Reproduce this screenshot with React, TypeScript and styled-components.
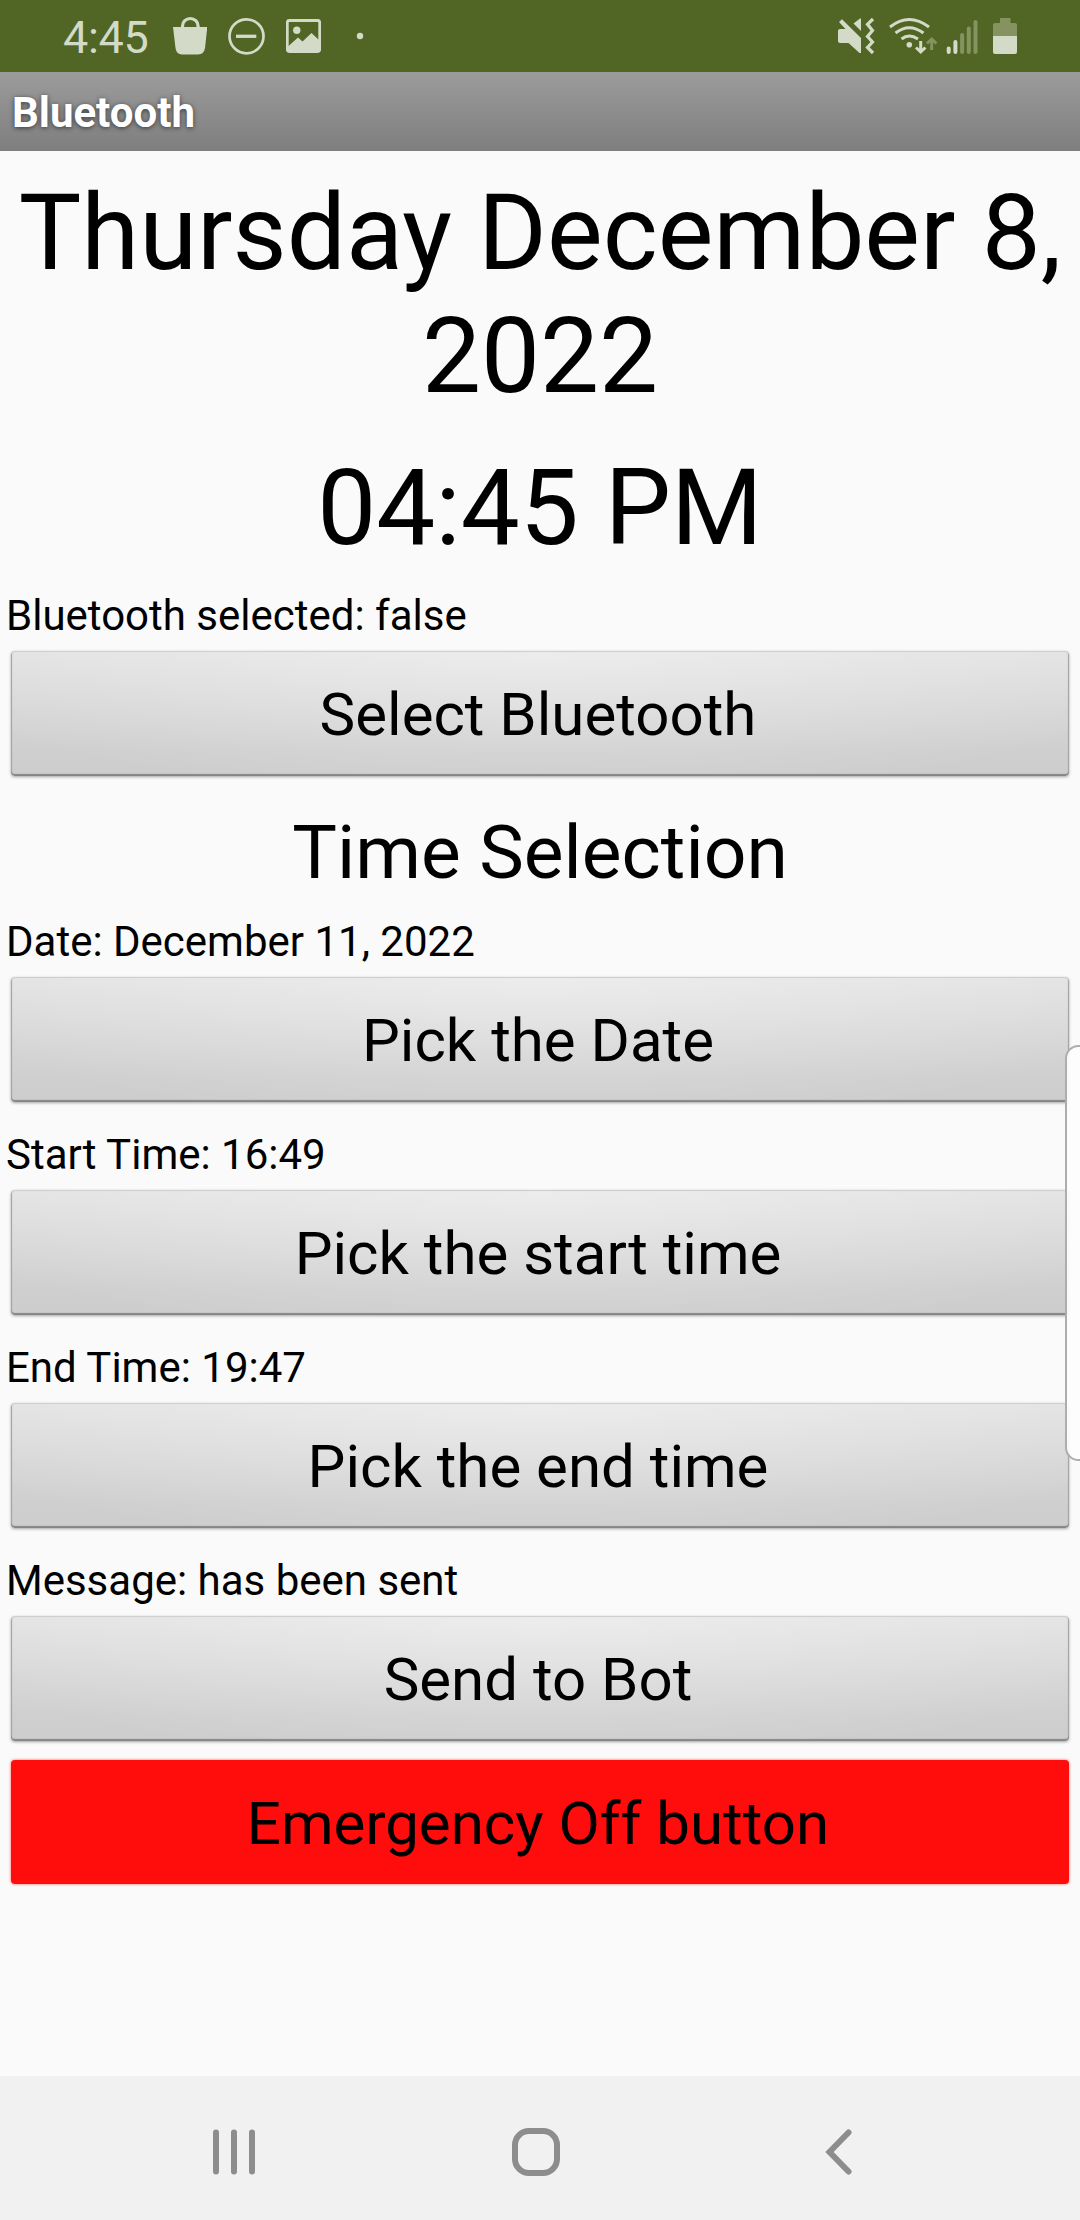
import React from 'react';
import styled, { createGlobalStyle } from 'styled-components';

const GlobalStyle = createGlobalStyle`
  * { box-sizing: border-box; }
  body { margin: 0; background: #fafafa; overflow: hidden; }
`;

const Screen = styled.div`
  position: relative;
  display: flex;
  flex-direction: column;
  width: 1080px;
  height: 2220px;
  overflow: hidden;
  background: #fafafa;
  color: #000;
  font-family: Roboto, 'Liberation Sans', sans-serif;
`;

const StatusBar = styled.header`
  display: flex;
  flex: none;
  justify-content: space-between;
  height: 72px;
  padding: 0 60px 0 63px;
  background: #516624;
  color: #d4dac8;
`;

const StatusGroup = styled.div`
  display: flex;
  align-items: center;
`;

const Clock = styled.span`
  width: 110px;
  font-size: 45px;
  line-height: 72px;
  padding-top: 3px;
  letter-spacing: -0.3px;
`;

const Glyph = styled.svg<{ $gap?: number }>`
  display: block;
  flex: none;
  height: 72px;
  margin-left: ${({ $gap = 0 }) => $gap}px;
`;

const TitleBar = styled.div`
  flex: none;
  height: 79px;
  padding-left: 12px;
  background: linear-gradient(#9c9c9c, #7e7e7e);
  color: #fff;
  font-size: 42px;
  font-weight: 700;
  line-height: 81px;
  text-shadow: 0 1px 5px rgba(0, 0, 0, 0.6);
`;

const Content = styled.main`
  display: flex;
  flex: 1;
  flex-direction: column;
  padding: 21px 11px 0;
`;

const Display = styled.h1<{ $space: number }>`
  margin: 0 -11px ${({ $space }) => $space}px;
  font-size: 105px;
  font-weight: 400;
  line-height: 123px;
  text-align: center;
`;

const SectionTitle = styled.h2`
  height: 113px;
  margin: 0;
  font-size: 75px;
  font-weight: 400;
  line-height: 114px;
  text-align: center;
`;

const Caption = styled.p`
  height: 69px;
  margin: 0 0 0 -5px;
  font-size: 42px;
  line-height: 67px;
  white-space: nowrap;
`;

const Button = styled.button<{ $danger?: boolean }>`
  flex: none;
  height: ${({ $danger }) => ($danger ? 124 : 125)}px;
  margin: 0 0 19px;
  padding: 3px 4px 0 0;
  border: 0;
  border-radius: 4px;
  font-family: inherit;
  font-size: 60px;
  line-height: 122px;
  color: #000;
  background: ${({ $danger }) =>
    $danger
      ? '#ff0d0d'
      : 'radial-gradient(ellipse 62% 120% at 50% 0, rgba(255,255,255,.35), rgba(255,255,255,0)), linear-gradient(#e3e3e3, #cfcfcf 80%, #cdcdcd)'};
  box-shadow: ${({ $danger }) =>
    $danger
      ? '0 0 3px 0 #ff5c5c'
      : 'inset 0 2px 1px -1px #cfcfcf, inset 0 -2px 1px #858585, inset 1px 0 1px #a5a5a5, inset -1px 0 1px #a5a5a5, 0 1px 3px rgba(0,0,0,.35)'};
`;

const EdgeHandle = styled.div`
  position: absolute;
  top: 1045px;
  right: -12px;
  width: 27px;
  height: 416px;
  border: 2px solid #adadad;
  border-radius: 18px;
  background: rgba(253, 253, 253, 0.94);
`;

const NavBar = styled.nav`
  display: flex;
  flex: none;
  height: 144px;
  padding: 4px 0 0 213px;
  align-items: center;
  background: #f1f1f1;
`;

const NavIcon = styled.svg<{ $gap?: number }>`
  display: block;
  margin-left: ${({ $gap = 0 }) => $gap}px;
  margin-top: 4px;
  fill: none;
  stroke: #8d8d8d;
  stroke-width: 6;
`;

const FADED = '#84935f';

export default function App() {
  return (
    <Screen>
      <GlobalStyle />
      <StatusBar>
        <StatusGroup>
          <Clock>4:45</Clock>
          <Glyph width="34" viewBox="173 0 34 72" fill="currentColor">
            <path d="M173 27H207.3L205 48Q204 54.5 198 54.5H182Q176.500 54.500 175.500 48Z" />
            <path d="M182.500 28V26a7.800 7.500 0 0 1 15.600 0v2" fill="none" stroke="currentColor" strokeWidth="3.2" />
          </Glyph>
          <Glyph $gap={21} width="37" viewBox="228 0 37 72" fill="none" stroke="currentColor" strokeWidth="2.700">
            <circle cx="246.500" cy="36.300" r="17" />
            <path d="M236 36.300H256.300" strokeWidth="3.300" />
          </Glyph>
          <Glyph $gap={21} width="35" viewBox="286 0 35 72">
            <rect x="287.300" y="20.500" width="32.400" height="31" rx="2" fill="none" stroke="currentColor" strokeWidth="2.800" />
            <circle cx="296.800" cy="30.300" r="3.700" fill="currentColor" />
            <path d="M288 46.500L298 37.500L302.500 41.500L311.500 33L320 41V51H288Z" fill="currentColor" />
          </Glyph>
          <Glyph $gap={35} width="8" viewBox="356 0 8 72">
            <circle cx="360" cy="36" r="3.200" fill="currentColor" />
          </Glyph>
        </StatusGroup>
        <StatusGroup>
          <Glyph width="38" viewBox="838 0 38 72" fill="currentColor">
            <path d="M840 29H845.500L839 22L842 19.300L861 38V53H859.500L848.500 43H840Q838 43 838 41V31Q838 29 840 29Z" />
            <path d="M853.500 23.500L860 18.500H861V31Z" />
            <path d="M873 19L867.500 24.300L872.500 30.500L867.500 36.500L872.500 42L867.500 47.500L873 53" fill="none" stroke="currentColor" strokeWidth="3.200" />
          </Glyph>
          <Glyph $gap={12} width="50" viewBox="888 0 50 72" fill="none" stroke="currentColor" strokeWidth="3">
            <path d="M890 27Q909 12 929 27" />
            <path d="M895.500 33Q909 22.500 923.500 33" />
            <path d="M901.500 39Q909 33 918 39" />
            <circle cx="909.300" cy="44.800" r="2.800" fill="currentColor" stroke="none" />
            <path d="M920.700 41V52M916 47.500L920.700 52L925.400 47.500" />
            <path d="M931.700 50V39M927 43.500L931.700 39L936.400 43.500" stroke={FADED} />
          </Glyph>
          <Glyph $gap={8} width="34" viewBox="946 0 34 72" fill="none" strokeWidth="4" strokeLinecap="round">
            <path d="M948.700 48.500V52M955.400 42V52" stroke="currentColor" />
            <path d="M962.100 35V52M968.800 28.500V52M975.500 22V52" stroke={FADED} />
          </Glyph>
          <Glyph $gap={13} width="24" viewBox="993 0 24 72">
            <path d="M993 36V25Q993 23 995 23H1000V18H1010.500V23H1015Q1017 23 1017 25V36Z" fill={FADED} />
            <path d="M993 36H1017V52Q1017 54 1015 54H995Q993 54 993 52Z" fill="currentColor" />
          </Glyph>
          <Glyph width="3" viewBox="0 0 3 72" />
        </StatusGroup>
      </StatusBar>
      <TitleBar>Bluetooth</TitleBar>
      <Content>
        <Display $space={29}>
          Thursday December 8,
          <br />
          2022
        </Display>
        <Display $space={12}>04:45 PM</Display>
        <Caption>Bluetooth selected: false</Caption>
        <Button>Select Bluetooth</Button>
        <SectionTitle>Time Selection</SectionTitle>
        <Caption>Date: December 11, 2022</Caption>
        <Button>Pick the Date</Button>
        <Caption>Start Time: 16:49</Caption>
        <Button>Pick the start time</Button>
        <Caption>End Time: 19:47</Caption>
        <Button>Pick the end time</Button>
        <Caption>Message: has been sent</Caption>
        <Button>Send to Bot</Button>
        <Button $danger>Emergency Off button</Button>
      </Content>
      <NavBar>
        <NavIcon width="42" height="48" viewBox="0 0 42 48" strokeLinecap="round">
          <path d="M3 4.500V43.500M21 4.500V43.500M39 4.500V43.500" />
        </NavIcon>
        <NavIcon $gap={257} width="48" height="48" viewBox="0 0 48 48">
          <rect x="3" y="3" width="42" height="42" rx="14" />
        </NavIcon>
        <NavIcon $gap={265} width="28" height="48" viewBox="0 0 28 48" strokeLinecap="round">
          <path d="M23.500 4.500L4.500 24L23.500 43.500" />
        </NavIcon>
      </NavBar>
      <EdgeHandle />
    </Screen>
  );
}
